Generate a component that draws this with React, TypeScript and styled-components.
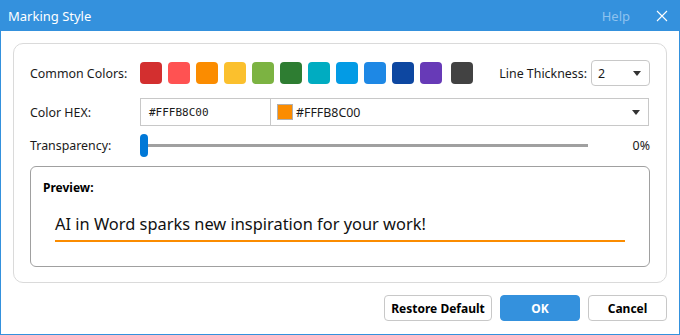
import styled, { createGlobalStyle } from "styled-components";

const GlobalStyle = createGlobalStyle`
  html, body {
    margin: 0;
    padding: 0;
    background: #ffffff;
  }
  * {
    box-sizing: border-box;
  }
`;

const swatches = [
  "#d32f2f",
  "#ff5252",
  "#fb8c00",
  "#fbc02d",
  "#7cb342",
  "#2e7d32",
  "#00acc1",
  "#039be5",
  "#1e88e5",
  "#0d47a1",
  "#673ab7",
  "#424242",
];

const Window = styled.div`
  width: 680px;
  height: 335px;
  display: flex;
  flex-direction: column;
  border: 1px solid #3491dd;
  border-top: none;
  font-family: "Noto Sans", "Open Sans", sans-serif;
  font-size: 12.4px;
  color: #1a1a1a;
  background: #fff;
`;

const TitleBar = styled.div`
  height: 31px;
  margin: 0 -1px;
  padding: 0 12px 0 8px;
  background: #3491dd;
  display: flex;
  align-items: center;
  color: #fff;
  font-size: 13px;
`;

const Title = styled.div`
  flex: 1;
`;

const HelpLink = styled.span`
  color: #8ec2ef;
  margin-right: 26px;
`;

const Body = styled.div`
  flex: 1;
  padding: 12px 12px 0;
  display: flex;
  flex-direction: column;
`;

const Panel = styled.div`
  border: 1px solid #dadada;
  border-radius: 10px;
  padding: 16px 16px 15px;
  display: flex;
  flex-direction: column;
`;

const Row = styled.div<{ $gap?: number }>`
  display: flex;
  align-items: center;
  margin-top: ${(p) => p.$gap ?? 0}px;
`;

const Label = styled.div`
  width: 110px;
  flex-shrink: 0;
`;

const Swatches = styled.div`
  display: flex;
  gap: 6px;
  flex: 1;
`;

const Swatch = styled.div<{ $color: string; $extra?: boolean }>`
  width: 22px;
  height: 22px;
  border-radius: 4px;
  background: ${(p) => p.$color};
  margin-left: ${(p) => (p.$extra ? 3 : 0)}px;
`;

const ThicknessLabel = styled.div`
  margin-right: 4px;
`;

const Select = styled.div<{ $width: number; $height: number; $radius: number }>`
  width: ${(p) => p.$width}px;
  height: ${(p) => p.$height}px;
  border: 1px solid #c8c8c8;
  border-radius: ${(p) => p.$radius}px;
  display: flex;
  align-items: center;
  padding: 0 8px 0 6px;
  gap: 3px;
`;

const SelectValue = styled.span`
  flex: 1;
  display: flex;
  align-items: center;
  gap: 3px;
`;

const Caret = styled.span`
  width: 0;
  height: 0;
  border-left: 4px solid transparent;
  border-right: 4px solid transparent;
  border-top: 5px solid #333;
`;

const HexInput = styled.div`
  width: 130px;
  height: 28px;
  border: 1px solid #c8c8c8;
  border-right: none;
  display: flex;
  align-items: center;
  padding-left: 8px;
  font-family: "DejaVu Sans Mono", "Liberation Mono", monospace;
  font-size: 11px;
`;

const ColorChip = styled.span<{ $color: string }>`
  width: 16px;
  height: 16px;
  background: ${(p) => p.$color};
  border: 1px solid #b0b0b0;
`;

const Slider = styled.div`
  flex: 1;
  height: 23px;
  display: flex;
  align-items: center;
`;

const Thumb = styled.div`
  width: 8px;
  height: 23px;
  border-radius: 4px;
  background: #0078d7;
`;

const Track = styled.div`
  width: 440px;
  height: 3px;
  background: #a0a0a0;
`;

const Percent = styled.div`
  margin-left: auto;
`;

const Preview = styled.div`
  margin-top: 9px;
  height: 101px;
  border: 1px solid #a0a0a0;
  border-radius: 6px;
  padding: 12px 24px 0 12px;
`;

const PreviewLabel = styled.div`
  font-size: 12px;
  font-weight: 700;
  color: #000;
`;

const PreviewText = styled.div<{ $color: string }>`
  margin: 16px 0 0 12px;
  font-size: 16.4px;
  color: #111;
  padding-bottom: 5px;
  border-bottom: 2px solid ${(p) => p.$color};
`;

const Footer = styled.div`
  display: flex;
  justify-content: flex-end;
  gap: 8px;
  margin-top: 12px;
`;

const Button = styled.button<{ $primary?: boolean; $width: number }>`
  width: ${(p) => p.$width}px;
  height: 26px;
  border-radius: 4px;
  font-family: "Noto Sans", "Open Sans", sans-serif;
  font-size: 12px;
  font-weight: 700;
  padding: 0;
  border: 1px solid ${(p) => (p.$primary ? "#3491dd" : "#c8c8c8")};
  background: ${(p) => (p.$primary ? "#3491dd" : "#fff")};
  color: ${(p) => (p.$primary ? "#fff" : "#000")};
`;

function CloseIcon() {
  return (
    <svg width="12" height="12" viewBox="0 0 12 12">
      <path d="M1 1L11 11M11 1L1 11" stroke="#fff" strokeWidth="1.1" />
    </svg>
  );
}

export default function App() {
  const current = "#FB8C00";
  return (
    <>
      <GlobalStyle />
      <Window>
        <TitleBar>
          <Title>Marking Style</Title>
          <HelpLink>Help</HelpLink>
          <CloseIcon />
        </TitleBar>
        <Body>
          <Panel>
            <Row>
              <Label>Common Colors:</Label>
              <Swatches>
                {swatches.map((c, i) => (
                  <Swatch key={c} $color={c} $extra={i === swatches.length - 1} />
                ))}
              </Swatches>
              <ThicknessLabel>Line Thickness:</ThicknessLabel>
              <Select $width={59} $height={26} $radius={4}>
                <SelectValue>2</SelectValue>
                <Caret />
              </Select>
            </Row>
            <Row $gap={12}>
              <Label>Color HEX:</Label>
              <HexInput>#FFFB8C00</HexInput>
              <Select $width={379} $height={28} $radius={0}>
                <SelectValue>
                  <ColorChip $color={current} />
                  #FFFB8C00
                </SelectValue>
                <Caret />
              </Select>
            </Row>
            <Row $gap={8}>
              <Label>Transparency:</Label>
              <Slider>
                <Thumb />
                <Track />
                <Percent>0%</Percent>
              </Slider>
            </Row>
            <Preview>
              <PreviewLabel>Preview:</PreviewLabel>
              <PreviewText $color={current}>
                AI in Word sparks new inspiration for your work!
              </PreviewText>
            </Preview>
          </Panel>
          <Footer>
            <Button $width={108}>Restore Default</Button>
            <Button $primary $width={80}>
              OK
            </Button>
            <Button $width={79}>Cancel</Button>
          </Footer>
        </Body>
      </Window>
    </>
  );
}
